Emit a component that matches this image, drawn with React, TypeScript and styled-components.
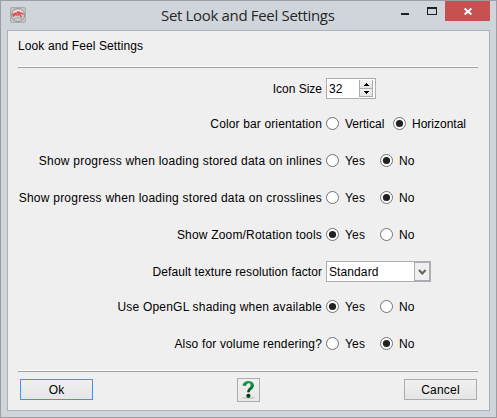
import React, { useState } from "react";
import styled, { createGlobalStyle } from "styled-components";

const GlobalStyle = createGlobalStyle`
  * { box-sizing: border-box; }
  body { margin: 0; overflow: hidden; }
  button { font: inherit; color: inherit; padding: 0; margin: 0; }
`;

const Window = styled.div`
  width: 497px;
  height: 418px;
  display: flex;
  flex-direction: column;
  padding: 0 6px 6px;
  border: 1px solid #9c9ea4;
  background: #d0d5dc;
  font: 12px/14px "Liberation Sans", Arial, sans-serif;
  color: #000;
  white-space: nowrap;
`;

const TitleBar = styled.header`
  height: 29px;
  flex: none;
  display: flex;
  align-items: flex-start;
`;

const AppIcon = styled.svg`
  flex: none;
  margin: 6px 0 0 3px;
`;

const Title = styled.h1`
  flex: 1;
  margin: 4px 0 0 135px;
  font: 15px/21px "Open Sans", "Noto Sans", sans-serif;
  letter-spacing: -0.33px;
  color: #262626;
`;

const WindowButtons = styled.div`
  display: flex;
  flex: none;
`;

const WindowButton = styled.button<{ $w: number; $close?: boolean }>`
  width: ${(p) => p.$w}px;
  height: 20px;
  border: 0;
  display: flex;
  background: ${(p) => (p.$close ? "#c75050" : "transparent")};
`;

const Client = styled.main`
  flex: 1;
  display: flex;
  flex-direction: column;
  border: 1px solid #aeb1b7;
  background: #efefef;
  padding: 0 11px 0 10px;
`;

const Heading = styled.div`
  height: 35px;
  padding-top: 8px;
  letter-spacing: 0.11px;
`;

const Separator = styled.div`
  flex: none;
  height: 2px;
  background: #a0a0a0;
  border-top: 1px solid #fff;
`;

const Form = styled.div`
  height: 302px;
  padding-top: 4px;
`;

const Row = styled.div<{ $h: number }>`
  height: ${(p) => p.$h}px;
  display: grid;
  grid-template-columns: 304px 1fr;
  column-gap: 4px;
  align-items: center;
`;

const Label = styled.span<{ $spacing: number }>`
  justify-self: end;
  letter-spacing: ${(p) => p.$spacing}px;
`;

const Options = styled.div`
  display: flex;
  align-items: center;
`;

const Option = styled.label<{ $w: number }>`
  width: ${(p) => p.$w}px;
  display: flex;
  align-items: center;
  gap: 6px;
`;

const OptionText = styled.span<{ $spacing: number }>`
  letter-spacing: ${(p) => p.$spacing}px;
`;

const RadioMark = styled.svg`
  flex: none;
`;

const SpinBox = styled.div`
  width: 50px;
  height: 21px;
  display: flex;
  justify-content: space-between;
  border: 1px solid #abadb3;
  background: #fff;
  padding: 1px 1px 1px 2px;
  line-height: 18px;
  letter-spacing: 0.2px;
`;

const SpinButtons = styled.div`
  width: 14px;
  margin-right: 1px;
  display: flex;
  flex-direction: column;
`;

const SpinButton = styled.button`
  height: 9px;
  border: 1px solid #acacac;
  border-top-width: 0;
  background: linear-gradient(#f2f2f2, #e5e5e5);
  display: flex;
  & + & { height: 8px; }
`;

const ComboBox = styled.div`
  width: 105px;
  height: 21px;
  display: flex;
  border: 1px solid #abadb3;
  background: #fff;
  padding-left: 2px;
  line-height: 21px;
`;

const ComboText = styled.span`
  flex: 1;
  letter-spacing: 0.1px;
`;

const ComboButton = styled.button`
  width: 16px;
  border: 1px solid #abadb3;
  background: #efefef;
  display: flex;
`;

const Footer = styled.footer`
  height: 37px;
  padding: 0 1px 0 2px;
  display: flex;
  align-items: center;
  justify-content: space-between;
`;

const PushButton = styled.button<{ $primary?: boolean }>`
  width: 73px;
  height: 21px;
  margin-top: -2px;
  border: 1px solid ${(p) => (p.$primary ? "#3399ff" : "#acacac")};
  background: linear-gradient(#f0f0f0, #e5e5e5);
  line-height: 20px;
  letter-spacing: 0.2px;
  text-align: center;
`;

const HelpButton = styled.button`
  width: 23px;
  height: 24px;
  margin-top: -1px;
  border: 1px solid #acacac;
  background: linear-gradient(#f0f0f0, #e8e8e8);
  display: flex;
`;

function Radio({ checked }: { checked: boolean }) {
  return (
    <RadioMark width="13" height="13" viewBox="0 0 13 13">
      <circle cx="6.5" cy="6.5" r="6" fill="#fff" stroke="#707070" />
      {checked && <circle cx="6.5" cy="6.5" r="3.6" fill="#212121" />}
    </RadioMark>
  );
}

interface Choice {
  label: string;
  height: number;
  spacing: number;
  options: [string, string];
  selected: number;
}

function RadioRow({ label, height, spacing, options, selected }: Choice) {
  const [value, setValue] = useState(selected);
  const wide = options[0] === "Vertical";
  return (
    <Row $h={height}>
      <Label $spacing={spacing}>{label}</Label>
      <Options>
        {options.map((o, i) => (
          <Option key={o} $w={wide ? 67 : 54} onClick={() => setValue(i)}>
            <Radio checked={value === i} />
            <OptionText $spacing={wide ? 0 : 0.2}>{o}</OptionText>
          </Option>
        ))}
      </Options>
    </Row>
  );
}

const yesNo: [string, string] = ["Yes", "No"];

export default function App() {
  return (
    <>
      <GlobalStyle />
      <Window>
        <TitleBar>
          <AppIcon width="16" height="16" viewBox="0 0 16 16">
            <rect x=".5" y=".5" width="15" height="15" rx="1.5" fill="#c4c4c5" stroke="#aaa9ab" />
            <circle cx="8" cy="8" r="6.6" fill="#cbcaca" stroke="#989698" />
            <path d="M3 5q5-3 10 0" fill="none" stroke="#eee" />
            <path d="M2 8l3-1.6 3-.6 3 .2 2.5 1.4M5 7.3l2 .8 3-.6 1.5 3M5 7.5l-2 2M7 4.8l3 .6" fill="none" stroke="#e3484a" strokeWidth="1.3" />
            <path d="M4 12q4-3 8 0" fill="none" stroke="#aaa" />
          </AppIcon>
          <Title>Set Look and Feel Settings</Title>
          <WindowButtons>
            <WindowButton $w={26} aria-label="Minimize">
              <svg width="26" height="20" viewBox="0 0 26 20" shapeRendering="crispEdges">
                <rect x="8" y="12" width="8" height="2" fill="#1f1f1f" />
              </svg>
            </WindowButton>
            <WindowButton $w={26} aria-label="Maximize">
              <svg width="26" height="20" viewBox="0 0 26 20" shapeRendering="crispEdges">
                <path d="M8 6h10v8H8zM9 8v5h8V8z" fill="#1f1f1f" fillRule="evenodd" />
              </svg>
            </WindowButton>
            <WindowButton $w={45} $close aria-label="Close">
              <svg width="45" height="20" viewBox="0 0 45 20">
                <path d="M19.6 7.5l6.8 6M26.4 7.5l-6.8 6" stroke="#fff" strokeWidth="1.9" />
              </svg>
            </WindowButton>
          </WindowButtons>
        </TitleBar>
        <Client>
          <Heading>Look and Feel Settings</Heading>
          <Separator />
          <Form>
            <Row $h={33}>
              <Label $spacing={0}>Icon Size</Label>
              <SpinBox>
                <span>32</span>
                <SpinButtons>
                  <SpinButton aria-label="Increase">
                    <svg width="12" height="8" viewBox="0 0 12 8" shapeRendering="crispEdges">
                      <path d="M6 3h1v1h1v1h1v1H4V5h1V4h1z" />
                    </svg>
                  </SpinButton>
                  <SpinButton aria-label="Decrease">
                    <svg width="12" height="7" viewBox="0 0 12 7" shapeRendering="crispEdges">
                      <path d="M4 2h5v1H8v1H7v1H6V4H5V3H4z" />
                    </svg>
                  </SpinButton>
                </SpinButtons>
              </SpinBox>
            </Row>
            <RadioRow label="Color bar orientation" height={37} spacing={0.14} options={["Vertical", "Horizontal"]} selected={1} />
            <RadioRow label="Show progress when loading stored data on inlines" height={37} spacing={0.24} options={yesNo} selected={1} />
            <RadioRow label="Show progress when loading stored data on crosslines" height={37} spacing={0.24} options={yesNo} selected={1} />
            <RadioRow label="Show Zoom/Rotation tools" height={37} spacing={0.18} options={yesNo} selected={0} />
            <Row $h={37}>
              <Label $spacing={0.08}>Default texture resolution factor</Label>
              <ComboBox>
                <ComboText>Standard</ComboText>
                <ComboButton aria-label="Open list">
                  <svg width="14" height="17" viewBox="0 0 14 17">
                    <path d="M4 7l3.3 3.5L10.6 7" fill="none" stroke="#606060" strokeWidth="2" />
                  </svg>
                </ComboButton>
              </ComboBox>
            </Row>
            <RadioRow label="Use OpenGL shading when available" height={33} spacing={0.21} options={yesNo} selected={0} />
            <RadioRow label="Also for volume rendering?" height={41} spacing={0.16} options={yesNo} selected={1} />
          </Form>
          <Separator />
          <Footer>
            <PushButton $primary>Ok</PushButton>
            <HelpButton aria-label="Help">
              <svg width="21" height="22" viewBox="0 0 21 22">
                <defs>
                  <linearGradient id="help" x1="0" y1="0" x2="0" y2="1">
                    <stop offset="0" stopColor="#20a050" />
                    <stop offset=".65" stopColor="#08772d" />
                    <stop offset="1" stopColor="#033b18" />
                  </linearGradient>
                </defs>
                <ellipse cx="10.5" cy="18.8" rx="6.5" ry=".9" fill="#c4c4c4" />
                <path d="M4.6 6.5C5 .3 16 .5 16 6.3c0 4-4 4-4.2 7H9.2C9 9.5 12.6 8.7 12.6 6.2c0-2.7-4.2-2.6-4.5.7z" fill="url(#help)" />
                <circle cx="10.4" cy="16.8" r="2.1" fill="#043d1a" />
              </svg>
            </HelpButton>
            <PushButton>Cancel</PushButton>
          </Footer>
        </Client>
      </Window>
    </>
  );
}
